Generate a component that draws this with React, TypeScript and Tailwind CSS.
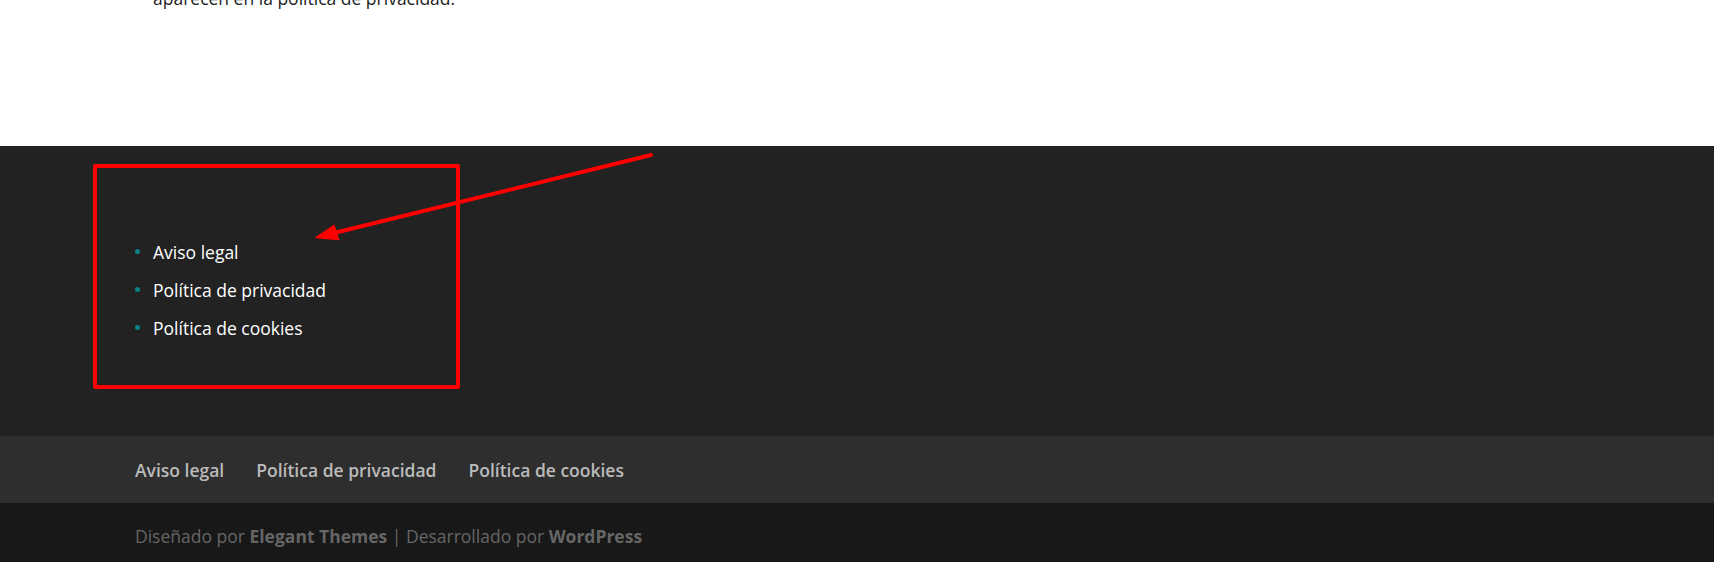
import React from "react";

const items = ["Aviso legal", "Política de privacidad", "Política de cookies"];

export default function App() {
  return (
    <div className="relative w-full h-[562px] overflow-hidden font-['Open_Sans',sans-serif] text-[17.5px]">
      {/* white content area */}
      <div className="flow-root h-[146px] bg-white pl-[153px]">
        <p className="-mt-[17px] leading-[30px] text-[#222]">
          aparecen en la política de privacidad.
        </p>
      </div>

      {/* footer widget area */}
      <div className="h-[290px] bg-[#222222] pl-[153px] pt-[87px]">
        <ul className="leading-[38px]">
          {items.map((t) => (
            <li key={t} className="relative text-white">
              <span className="absolute -left-[18px] top-[16px] h-[5px] w-[5px] rounded-full bg-[#0b8287]" />
              {t}
            </li>
          ))}
        </ul>
      </div>

      {/* footer nav */}
      <div className="flex h-[67px] items-center gap-[32px] bg-[#2e2e2e] pl-[135px] font-semibold leading-[24px] text-[#bbbbbb]">
        {items.map((t) => (
          <span key={t}>{t}</span>
        ))}
      </div>

      {/* credits */}
      <div className="h-[59px] bg-[#181818] pl-[135px] pt-[21px] leading-[24px] text-[#666666]">
        Diseñado por <span className="font-bold">Elegant Themes</span> | Desarrollado por{" "}
        <span className="font-bold">WordPress</span>
      </div>

      {/* annotation overlay */}
      <div className="pointer-events-none absolute left-[93px] top-[164px] h-[225px] w-[367px] rounded-[2px] border-[4px] border-[#ff0000]" />
      <svg
        className="pointer-events-none absolute left-0 top-0"
        width="1714"
        height="562"
        viewBox="0 0 1714 562"
      >
        <line x1="651" y1="155" x2="330" y2="234" stroke="#ff0000" strokeWidth="4" strokeLinecap="round" />
        <polygon points="316,237.5 334,225.5 338.5,239.5" fill="#ff0000" stroke="#ff0000" strokeWidth="1.5" strokeLinejoin="round" />
      </svg>
    </div>
  );
}
